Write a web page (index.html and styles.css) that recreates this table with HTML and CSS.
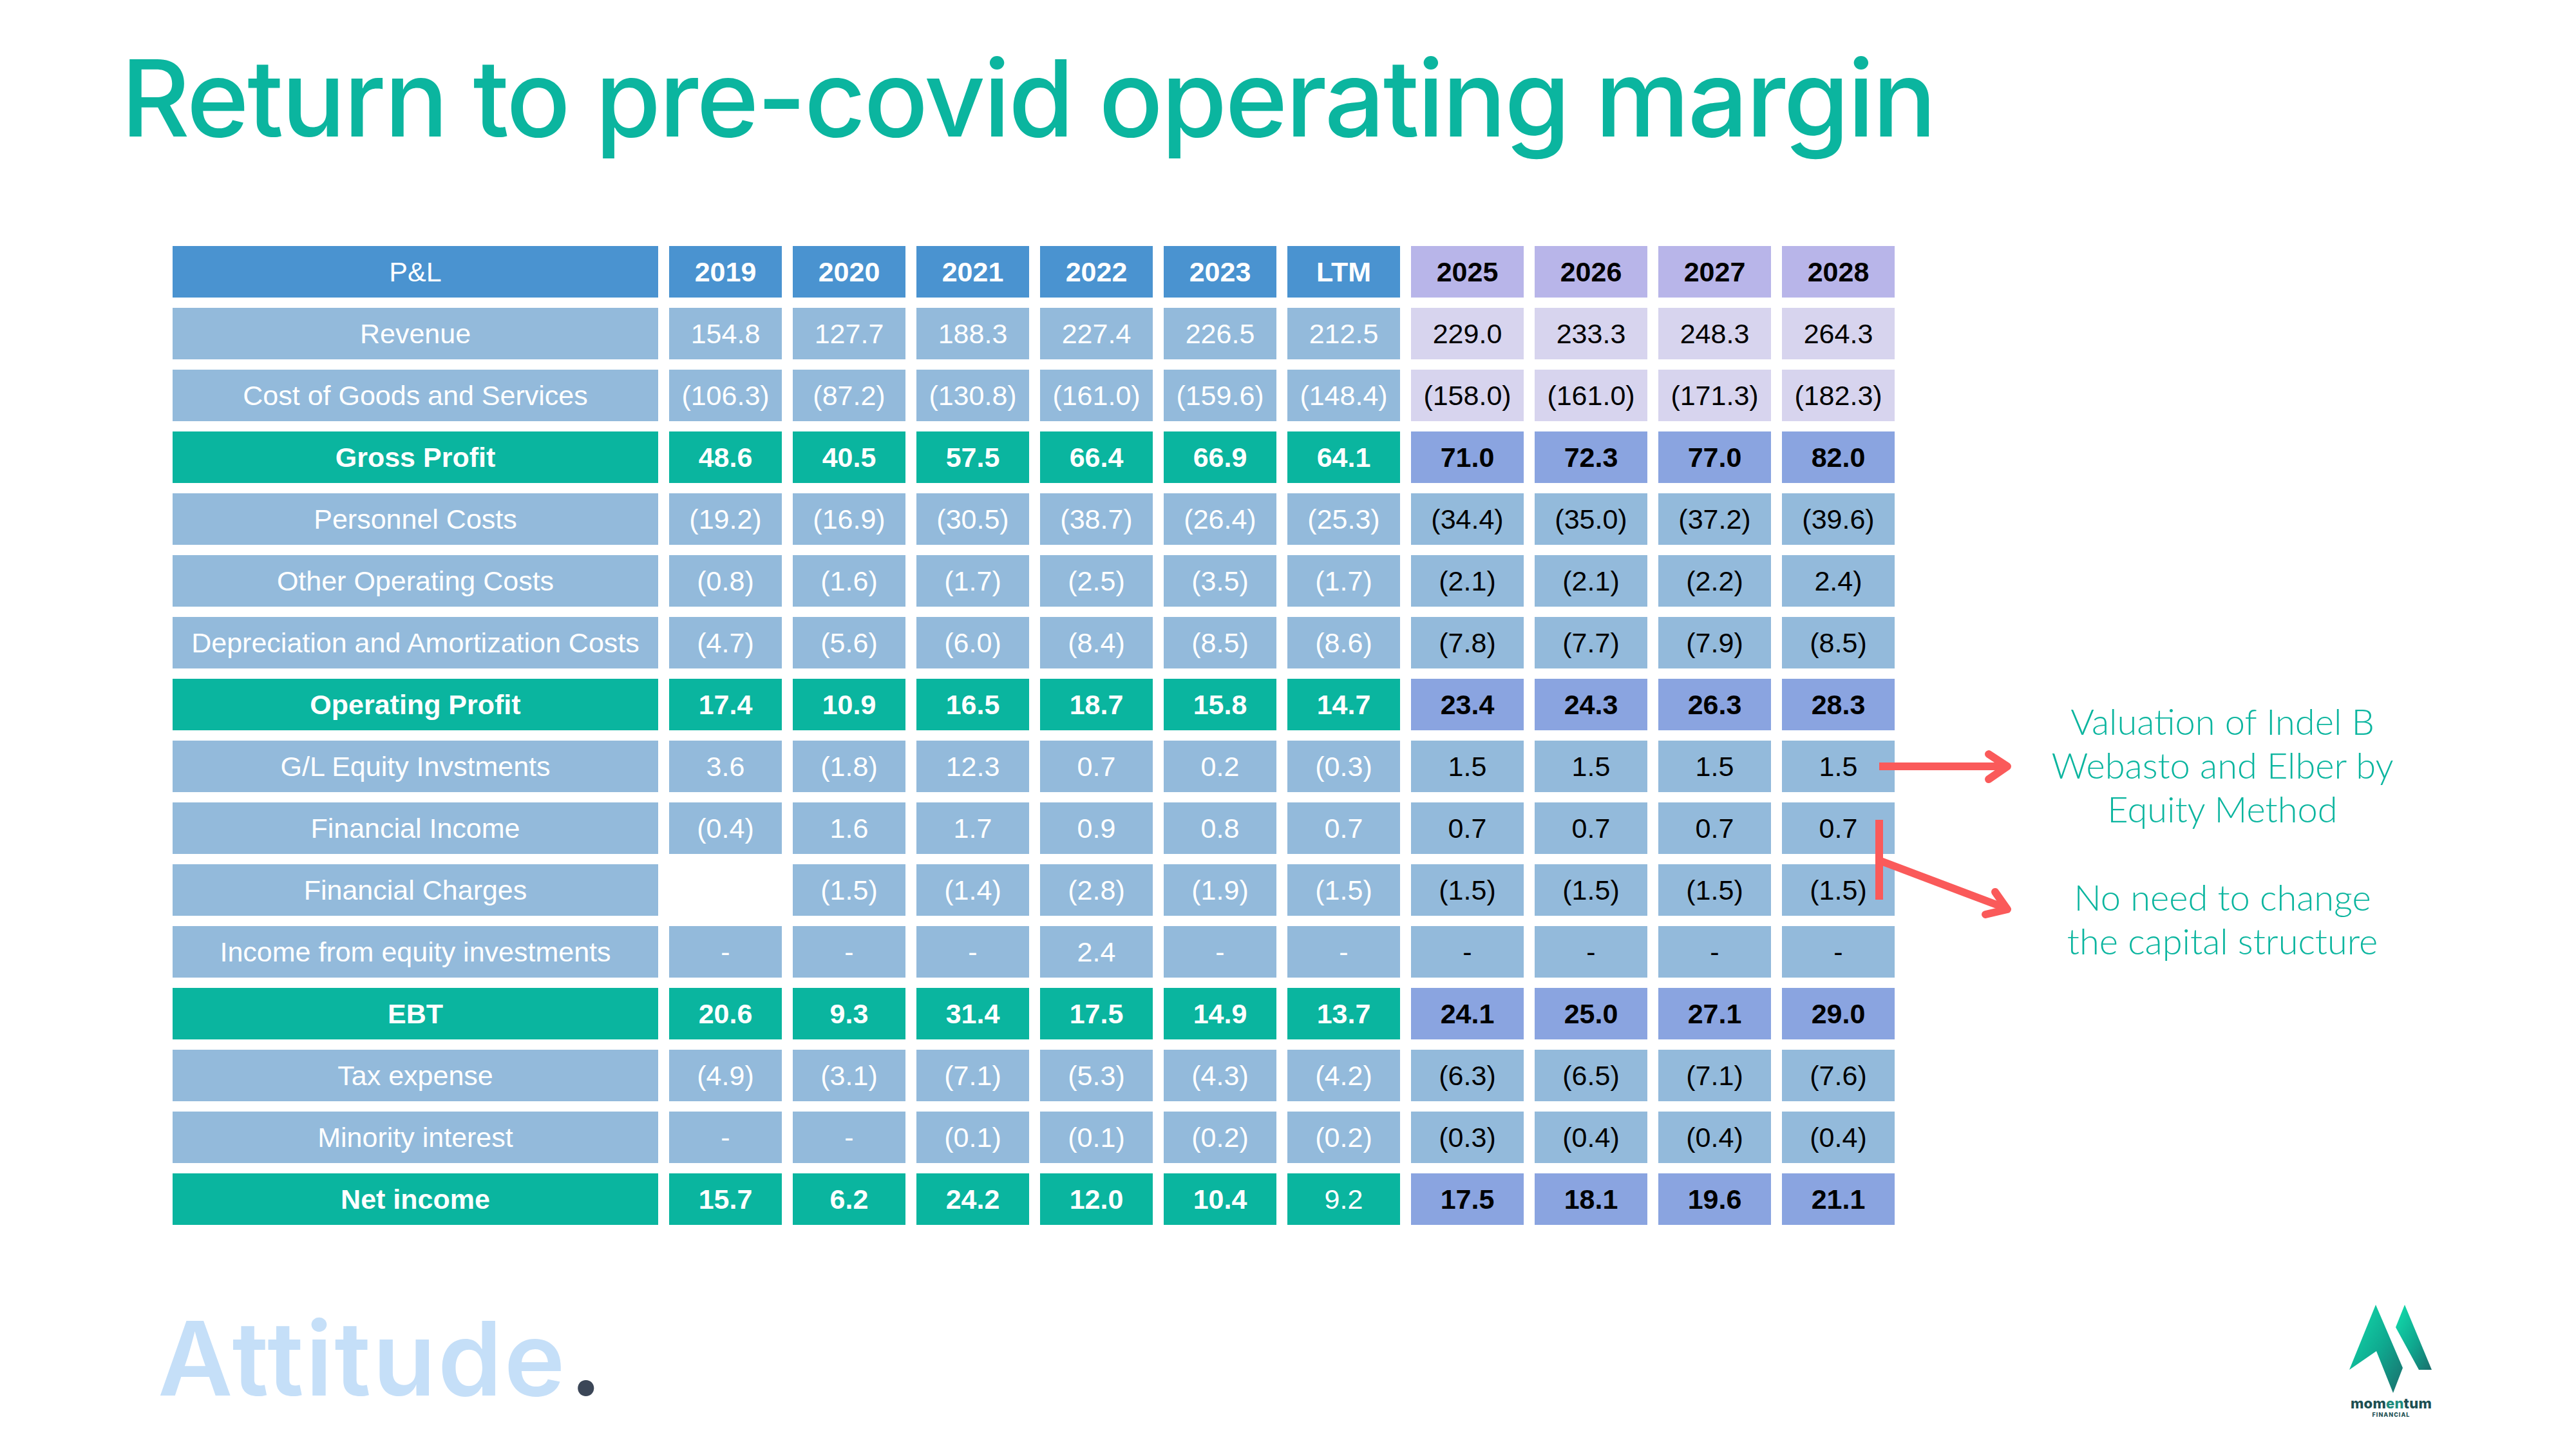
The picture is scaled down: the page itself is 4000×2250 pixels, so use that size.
FILE: index.html
```html
<!DOCTYPE html>
<html lang="en">
<head>
<meta charset="utf-8">
<title>Return to pre-covid operating margin</title>
<link rel="stylesheet" href="styles.css">
</head>
<body>
<div class="slide">
  <h1 class="title">Return to pre-covid operating margin</h1>

  <div class="main">
    <div class="pl">
      <div class="c hdr lbl-n">P&amp;L</div>
      <div class="c hdr">2019</div><div class="c hdr">2020</div><div class="c hdr">2021</div><div class="c hdr">2022</div><div class="c hdr">2023</div><div class="c hdr">LTM</div>
      <div class="c fhdr">2025</div><div class="c fhdr">2026</div><div class="c fhdr">2027</div><div class="c fhdr">2028</div>

      <div class="c lt">Revenue</div>
      <div class="c lt">154.8</div><div class="c lt">127.7</div><div class="c lt">188.3</div><div class="c lt">227.4</div><div class="c lt">226.5</div><div class="c lt">212.5</div>
      <div class="c flt">229.0</div><div class="c flt">233.3</div><div class="c flt">248.3</div><div class="c flt">264.3</div>

      <div class="c lt">Cost of Goods and Services</div>
      <div class="c lt">(106.3)</div><div class="c lt">(87.2)</div><div class="c lt">(130.8)</div><div class="c lt">(161.0)</div><div class="c lt">(159.6)</div><div class="c lt">(148.4)</div>
      <div class="c flt">(158.0)</div><div class="c flt">(161.0)</div><div class="c flt">(171.3)</div><div class="c flt">(182.3)</div>

      <div class="c tl">Gross Profit</div>
      <div class="c tl">48.6</div><div class="c tl">40.5</div><div class="c tl">57.5</div><div class="c tl">66.4</div><div class="c tl">66.9</div><div class="c tl">64.1</div>
      <div class="c fb">71.0</div><div class="c fb">72.3</div><div class="c fb">77.0</div><div class="c fb">82.0</div>

      <div class="c lt">Personnel Costs</div>
      <div class="c lt">(19.2)</div><div class="c lt">(16.9)</div><div class="c lt">(30.5)</div><div class="c lt">(38.7)</div><div class="c lt">(26.4)</div><div class="c lt">(25.3)</div>
      <div class="c fn">(34.4)</div><div class="c fn">(35.0)</div><div class="c fn">(37.2)</div><div class="c fn">(39.6)</div>

      <div class="c lt">Other Operating Costs</div>
      <div class="c lt">(0.8)</div><div class="c lt">(1.6)</div><div class="c lt">(1.7)</div><div class="c lt">(2.5)</div><div class="c lt">(3.5)</div><div class="c lt">(1.7)</div>
      <div class="c fn">(2.1)</div><div class="c fn">(2.1)</div><div class="c fn">(2.2)</div><div class="c fn">2.4)</div>

      <div class="c lt">Depreciation and Amortization Costs</div>
      <div class="c lt">(4.7)</div><div class="c lt">(5.6)</div><div class="c lt">(6.0)</div><div class="c lt">(8.4)</div><div class="c lt">(8.5)</div><div class="c lt">(8.6)</div>
      <div class="c fn">(7.8)</div><div class="c fn">(7.7)</div><div class="c fn">(7.9)</div><div class="c fn">(8.5)</div>

      <div class="c tl">Operating Profit</div>
      <div class="c tl">17.4</div><div class="c tl">10.9</div><div class="c tl">16.5</div><div class="c tl">18.7</div><div class="c tl">15.8</div><div class="c tl">14.7</div>
      <div class="c fb">23.4</div><div class="c fb">24.3</div><div class="c fb">26.3</div><div class="c fb">28.3</div>

      <div class="c lt">G/L Equity Invstments</div>
      <div class="c lt">3.6</div><div class="c lt">(1.8)</div><div class="c lt">12.3</div><div class="c lt">0.7</div><div class="c lt">0.2</div><div class="c lt">(0.3)</div>
      <div class="c fn">1.5</div><div class="c fn">1.5</div><div class="c fn">1.5</div><div class="c fn">1.5</div>

      <div class="c lt">Financial Income</div>
      <div class="c lt">(0.4)</div><div class="c lt">1.6</div><div class="c lt">1.7</div><div class="c lt">0.9</div><div class="c lt">0.8</div><div class="c lt">0.7</div>
      <div class="c fn">0.7</div><div class="c fn">0.7</div><div class="c fn">0.7</div><div class="c fn">0.7</div>

      <div class="c lt">Financial Charges</div>
      <div class="c blank"></div><div class="c lt">(1.5)</div><div class="c lt">(1.4)</div><div class="c lt">(2.8)</div><div class="c lt">(1.9)</div><div class="c lt">(1.5)</div>
      <div class="c fn">(1.5)</div><div class="c fn">(1.5)</div><div class="c fn">(1.5)</div><div class="c fn">(1.5)</div>

      <div class="c lt">Income from equity investments</div>
      <div class="c lt">-</div><div class="c lt">-</div><div class="c lt">-</div><div class="c lt">2.4</div><div class="c lt">-</div><div class="c lt">-</div>
      <div class="c fn">-</div><div class="c fn">-</div><div class="c fn">-</div><div class="c fn">-</div>

      <div class="c tl">EBT</div>
      <div class="c tl">20.6</div><div class="c tl">9.3</div><div class="c tl">31.4</div><div class="c tl">17.5</div><div class="c tl">14.9</div><div class="c tl">13.7</div>
      <div class="c fb">24.1</div><div class="c fb">25.0</div><div class="c fb">27.1</div><div class="c fb">29.0</div>

      <div class="c lt">Tax expense</div>
      <div class="c lt">(4.9)</div><div class="c lt">(3.1)</div><div class="c lt">(7.1)</div><div class="c lt">(5.3)</div><div class="c lt">(4.3)</div><div class="c lt">(4.2)</div>
      <div class="c fn">(6.3)</div><div class="c fn">(6.5)</div><div class="c fn">(7.1)</div><div class="c fn">(7.6)</div>

      <div class="c lt">Minority interest</div>
      <div class="c lt">-</div><div class="c lt">-</div><div class="c lt">(0.1)</div><div class="c lt">(0.1)</div><div class="c lt">(0.2)</div><div class="c lt">(0.2)</div>
      <div class="c fn">(0.3)</div><div class="c fn">(0.4)</div><div class="c fn">(0.4)</div><div class="c fn">(0.4)</div>

      <div class="c tl">Net income</div>
      <div class="c tl">15.7</div><div class="c tl">6.2</div><div class="c tl">24.2</div><div class="c tl">12.0</div><div class="c tl">10.4</div><div class="c tl reg">9.2</div>
      <div class="c fb">17.5</div><div class="c fb">18.1</div><div class="c fb">19.6</div><div class="c fb">21.1</div>
    </div>

    <div class="notes">
      <p class="note">Valuation of Indel B<br>Webasto and Elber by<br>Equity Method</p>
      <p class="note note2">No need to change<br>the capital structure</p>
    </div>
  </div>

  <svg class="arrows" width="240" height="290" viewBox="2900 1150 240 290" aria-hidden="true">
    <g fill="none" stroke="#FA5A5A" stroke-width="12">
      <line x1="2918" y1="1190" x2="3114" y2="1190"/>
      <polyline points="3088,1171 3117,1190 3088,1210" stroke-linecap="round" stroke-linejoin="round"/>
      <line x1="2918" y1="1273" x2="2918" y2="1397"/>
      <line x1="2918" y1="1336" x2="3114" y2="1410"/>
      <polyline points="3098,1385 3117,1412 3083,1420" stroke-linecap="round" stroke-linejoin="round"/>
    </g>
  </svg>

  <div class="footer">
    <div class="attitude">Attitude<span class="dot">.</span></div>
    <div class="momentum">
      <svg class="m-mark" width="134" height="140" viewBox="30 24 134 140" aria-hidden="true">
        <defs>
          <linearGradient id="mg" x1="0" y1="0" x2="1" y2="1">
            <stop offset="0" stop-color="#12E0AE"/>
            <stop offset="0.55" stop-color="#0FA88F"/>
            <stop offset="1" stop-color="#1A6E6C"/>
          </linearGradient>
        </defs>
        <polygon points="73,25 32,126 74,97 100,162 115,123" fill="url(#mg)"/>
        <polygon points="118,25 104,60 140,126 160,126" fill="url(#mg)"/>
      </svg>
      <div class="m-name"><span class="m-dk">mom</span><span class="m-lt">en</span><span class="m-dk">tum</span></div>
      <div class="m-sub">FINANCIAL</div>
    </div>
  </div>
</div>
</body>
</html>
```

FILE: styles.css
```css
* { box-sizing: border-box; }
html, body { margin: 0; padding: 0; background: #ffffff; }
.slide {
  width: 4000px;
  height: 2250px;
  position: relative;
  overflow: hidden;
  font-family: "Liberation Sans", Arial, sans-serif;
}
.title {
  margin: 0;
  padding: 70px 0 0 188px;
  font-family: Inter, "Liberation Sans", sans-serif;
  font-weight: 500;
  font-size: 165px;
  line-height: 165px;
  color: #0BB59F;
  letter-spacing: -2.8px;
}
.main {
  display: flex;
  align-items: flex-start;
  margin-top: 147px;
  padding-left: 268px;
}
.pl {
  display: grid;
  grid-template-columns: 754px repeat(10, 175px);
  grid-auto-rows: 80px;
  column-gap: 17px;
  row-gap: 16px;
}
.c {
  display: flex;
  align-items: center;
  justify-content: center;
  font-size: 43px;
  font-weight: 400;
  white-space: nowrap;
}
.hdr { background: #4A93D0; color: #fff; font-weight: 700; }
.lbl-n { font-weight: 400; }
.fhdr { background: #B8B5E9; color: #000; font-weight: 700; }
.lt { background: #93BADB; color: #fff; }
.flt { background: #D7D4EE; color: #000; }
.fn { background: #93BADB; color: #000; }
.tl { background: #0AB59F; color: #fff; font-weight: 700; }
.tl.reg { font-weight: 400; }
.fb { background: #8AA4E0; color: #000; font-weight: 700; }
.blank { background: transparent; }

.notes {
  width: 700px;
  margin-left: 159px;
  margin-top: 704px;
  text-align: center;
}
.note {
  margin: 0;
  font-family: Lato, "Open Sans", sans-serif;
  font-size: 56px;
  line-height: 68px;
  color: #0BB59F;
  font-weight: 300;
}
.note2 { margin-top: 69px; }

.arrows {
  position: absolute;
  left: 2900px;
  top: 1150px;
}

.footer {
  display: flex;
  justify-content: space-between;
  align-items: flex-start;
  margin-top: 123px;
  padding: 0 220px 0 245px;
}
.attitude {
  margin-top: 4px;
  font-family: Inter, "Liberation Sans", sans-serif;
  font-weight: 600;
  font-size: 160px;
  line-height: 160px;
  color: #C5DFF8;
  letter-spacing: 3px;
}
.dot { color: #3B4657; margin-left: 4px; }
.momentum {
  display: flex;
  flex-direction: column;
  align-items: center;
  width: 134px;
}
.m-mark { display: block; }
.m-name {
  margin-top: 2px;
  font-family: Inter, "Liberation Sans", sans-serif;
  font-weight: 800;
  font-size: 22px;
  line-height: 24px;
  letter-spacing: 0.2px;
}
.m-dk { color: #1D4F52; }
.m-lt { color: #1E8C7E; }
.m-sub {
  font-family: Inter, "Liberation Sans", sans-serif;
  font-weight: 800;
  font-size: 9px;
  line-height: 12px;
  letter-spacing: 1px;
  color: #1D4F52;
}
```
